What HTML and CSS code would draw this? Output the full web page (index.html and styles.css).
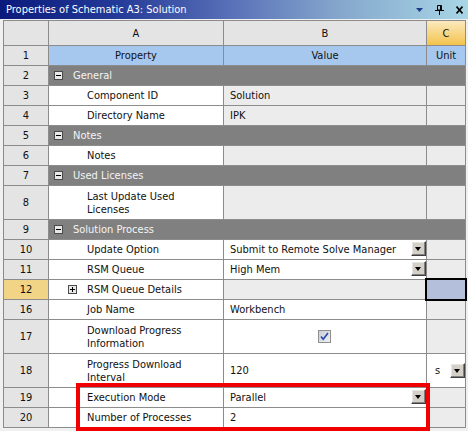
FILE: index.html
```html
<!DOCTYPE html>
<html>
<head>
<meta charset="utf-8">
<link rel="stylesheet" href="styles.css">
</head>
<body>
<div class="panel">
  <div class="titlebar">
    <span class="title">Properties of Schematic A3: Solution</span>
    <span class="tb-icons">
      <svg class="tb-menu" width="7" height="4" viewBox="0 0 7 4"><path d="M0 0H7L3.5 4Z" fill="#1d3a8c"/></svg>
      <svg class="tb-pin" width="9" height="10" viewBox="0 0 9 10"><path d="M2.5 0.5H6.5V5H2.5Z M5.5 0.5V5 M0 5.5H9 M4.5 5.5V10" fill="none" stroke="#000" stroke-width="1"/></svg>
      <svg class="tb-close" width="7" height="8" viewBox="0 0 7 8"><path d="M0.5 0.5L6.5 7.5M6.5 0.5L0.5 7.5" stroke="#000" stroke-width="1.6"/></svg>
    </span>
  </div>
  <div class="grid-wrap">
    <div class="grid">
      <div class="rn head"></div>
      <div class="hd head">A</div>
      <div class="hd head">B</div>
      <div class="hd head hd-c">C</div>

      <div class="rn">1</div>
      <div class="colhead">Property</div>
      <div class="colhead">Value</div>
      <div class="colhead">Unit</div>

      <div class="rn">2</div>
      <div class="section"><span class="box minus"></span>General</div>

      <div class="rn">3</div>
      <div class="prop">Component ID</div>
      <div class="val ro">Solution</div>
      <div class="unit"></div>

      <div class="rn">4</div>
      <div class="prop">Directory Name</div>
      <div class="val ro">IPK</div>
      <div class="unit"></div>

      <div class="rn">5</div>
      <div class="section"><span class="box minus"></span>Notes</div>

      <div class="rn">6</div>
      <div class="prop">Notes</div>
      <div class="val ro"></div>
      <div class="unit"></div>

      <div class="rn">7</div>
      <div class="section"><span class="box minus"></span>Used Licenses</div>

      <div class="rn tall">8</div>
      <div class="prop tall">Last Update Used<br>Licenses</div>
      <div class="val ro tall"></div>
      <div class="unit tall"></div>

      <div class="rn">9</div>
      <div class="section"><span class="box minus"></span>Solution Process</div>

      <div class="rn">10</div>
      <div class="prop">Update Option</div>
      <div class="val">Submit to Remote Solve Manager<span class="dd"></span></div>
      <div class="unit"></div>

      <div class="rn">11</div>
      <div class="prop">RSM Queue</div>
      <div class="val">High Mem<span class="dd"></span></div>
      <div class="unit"></div>

      <div class="rn rn-active">12</div>
      <div class="prop prop-exp"><span class="box plus"></span>RSM Queue Details</div>
      <div class="val ro"></div>
      <div class="unit selected"></div>

      <div class="rn">16</div>
      <div class="prop">Job Name</div>
      <div class="val">Workbench</div>
      <div class="unit"></div>

      <div class="rn tall">17</div>
      <div class="prop tall">Download Progress<br>Information</div>
      <div class="val tall center">
        <svg class="check" width="13" height="13" viewBox="0 0 13 13">
          <defs><linearGradient id="cbg" x1="0" y1="0" x2="1" y2="1"><stop offset="0" stop-color="#c9ccd6"/><stop offset="1" stop-color="#eef0f6"/></linearGradient></defs>
          <rect x="0.5" y="0.5" width="12" height="12" fill="url(#cbg)" stroke="#8f8f8f"/>
          <path d="M3 6.5L5.2 9.2L10 3" fill="none" stroke="#2348a8" stroke-width="1.6"/>
        </svg>
      </div>
      <div class="unit tall"></div>

      <div class="rn tall">18</div>
      <div class="prop tall">Progress Download<br>Interval</div>
      <div class="val tall">120</div>
      <div class="unit unit-edit tall">s<span class="dd dd-mid"></span></div>

      <div class="rn">19</div>
      <div class="prop">Execution Mode</div>
      <div class="val">Parallel<span class="dd"></span></div>
      <div class="unit"></div>

      <div class="rn">20</div>
      <div class="prop">Number of Processes</div>
      <div class="val">2</div>
      <div class="unit"></div>
    </div>
  </div>
  <div class="highlight"></div>
</div>
</body>
</html>
```
FILE: styles.css
```css
html, body {
  margin: 0;
  padding: 0;
}
body {
  width: 468px;
  height: 431px;
  overflow: hidden;
  background: #f0f0f0;
  font-family: "DejaVu Sans Condensed", "Liberation Sans", sans-serif;
  font-size: 11px;
  color: #111;
}
.panel {
  position: relative;
  width: 468px;
  height: 431px;
}
.titlebar {
  height: 19px;
  display: flex;
  align-items: center;
  justify-content: space-between;
  padding: 0 5px 0 6px;
  background: linear-gradient(to right, #0a1a7c 0%, #243a98 25%, #5a72b8 50%, #84a6cc 72%, #a8d6e6 100%);
  color: #fff;
  font-size: 11px;
}
.tb-icons {
  display: flex;
  align-items: center;
  gap: 12px;
}
.tb-menu { margin-top: 1px; }

.grid-wrap {
  padding: 1px 0 0 3px;
}
.grid {
  display: grid;
  grid-template-columns: 44px 174px 202px 38px;
  gap: 1px;
  padding: 1px;
  width: max-content;
  background: #8c8c8c;
}
.grid > div {
  min-height: 19px;
  display: flex;
  align-items: center;
  white-space: nowrap;
  line-height: 13px;
}
.grid > .tall {
  min-height: 33px;
}
.grid > .head {
  min-height: 24px;
}
.rn {
  background: #e4e4e4;
  justify-content: center;
}
.rn-active {
  background: #f1d486;
}
.hd {
  background: #e4e4e4;
  justify-content: center;
}
.hd-c {
  background: linear-gradient(to bottom, #fbeabf 0%, #f6d27a 60%, #f3c34c 100%);
}
.colhead {
  background: #a6c8ee;
  justify-content: center;
}
.section {
  grid-column: 2 / 5;
  background: #808080;
  color: #f4f4f4;
  padding-left: 5px;
  gap: 10px;
}
.box {
  width: 7px;
  height: 7px;
  border: 1px solid #4a4a4a;
  background: #e8e8e8;
  position: relative;
  flex: none;
}
.box::before {
  content: "";
  position: absolute;
  left: 1px;
  top: 3px;
  width: 5px;
  height: 1px;
  background: #000;
}
.plus::after {
  content: "";
  position: absolute;
  left: 3px;
  top: 1px;
  width: 1px;
  height: 5px;
  background: #000;
}
.prop {
  background: #fff;
  padding-left: 38px;
}
.prop-exp {
  padding-left: 19px;
  gap: 10px;
}
.val {
  background: #fff;
  padding-left: 6px;
}
.val.ro {
  background: #ececec;
}
.val.center {
  justify-content: center;
  padding-left: 0;
}
.check {
  display: block;
  margin-left: -1px;
}
.unit {
  background: #ececec;
}
.unit-edit {
  background: #fff;
  padding-left: 8px;
}
.selected {
  background: #b4bfdc;
  outline: 2px solid #000;
  outline-offset: 0;
  position: relative;
  z-index: 1;
}
.dd {
  margin-left: auto;
  margin-bottom: 2px;
  width: 13px;
  height: 13px;
  flex: none;
  background: #d4d0c8;
  border: 1px solid;
  border-color: #ffffff #404040 #404040 #ffffff;
  box-shadow: inset -1px -1px 0 #808080, inset 1px 1px 0 #e8e6e0;
  position: relative;
}
.dd::after {
  content: "";
  position: absolute;
  left: 3px;
  top: 5px;
  border-left: 3.5px solid transparent;
  border-right: 3.5px solid transparent;
  border-top: 4px solid #000;
}
.dd-mid {
  margin-bottom: 0;
}
.highlight {
  position: absolute;
  left: 76px;
  top: 383px;
  width: 346px;
  height: 40px;
  border: 4px solid #f00000;
  pointer-events: none;
}
```
